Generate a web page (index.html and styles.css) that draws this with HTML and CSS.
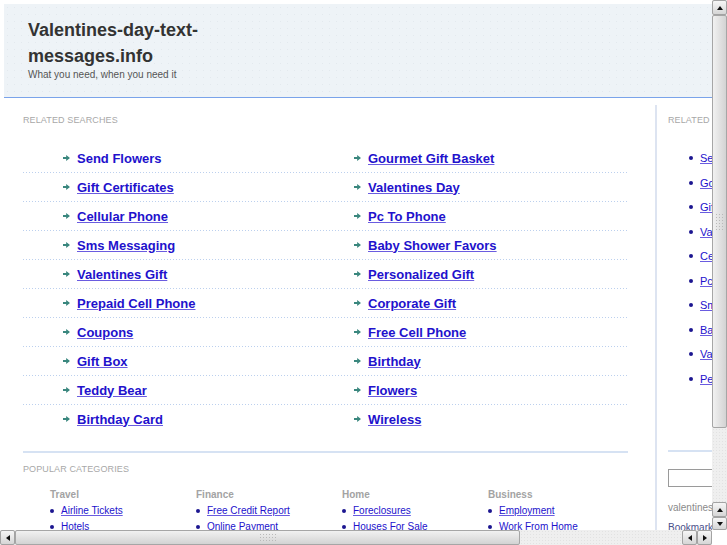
FILE: index.html
```html
<!DOCTYPE html>
<html lang="en">
<head>
    <meta charset="UTF-8">
    <meta name="viewport" content="width=device-width, initial-scale=1.0">
    <title>Valentines-day-text-messages.info</title>
    <link rel="stylesheet" href="styles.css">
</head>
<body>
    <div class="page">
        <div class="header">
            <h1 class="site-name">Valentines-day-text-messages.info</h1>
            <p class="tagline">What you need, when you need it</p>
        </div>
        <div class="main">
            <div class="content">
                <h2 class="section-title">Related Searches</h2>
                <ul class="searches">
                    <li><a href="#" class="plain">Send Flowers</a></li>
                    <li><a href="#">Gourmet Gift Basket</a></li>
                    <li><a href="#">Gift Certificates</a></li>
                    <li><a href="#">Valentines Day</a></li>
                    <li><a href="#">Cellular Phone</a></li>
                    <li><a href="#">Pc To Phone</a></li>
                    <li><a href="#">Sms Messaging</a></li>
                    <li><a href="#">Baby Shower Favors</a></li>
                    <li><a href="#">Valentines Gift</a></li>
                    <li><a href="#">Personalized Gift</a></li>
                    <li><a href="#">Prepaid Cell Phone</a></li>
                    <li><a href="#">Corporate Gift</a></li>
                    <li><a href="#">Coupons</a></li>
                    <li><a href="#">Free Cell Phone</a></li>
                    <li><a href="#">Gift Box</a></li>
                    <li><a href="#">Birthday</a></li>
                    <li><a href="#">Teddy Bear</a></li>
                    <li><a href="#">Flowers</a></li>
                    <li><a href="#">Birthday Card</a></li>
                    <li><a href="#">Wireless</a></li>
                </ul>
                <div class="divider"></div>
                <h2 class="section-title popular">Popular Categories</h2>
                <div class="categories">
                    <div class="category">
                        <h3>Travel</h3>
                        <ul class="bullets">
                            <li><a href="#">Airline Tickets</a></li>
                            <li><a href="#">Hotels</a></li>
                        </ul>
                    </div>
                    <div class="category">
                        <h3>Finance</h3>
                        <ul class="bullets">
                            <li><a href="#">Free Credit Report</a></li>
                            <li><a href="#">Online Payment</a></li>
                        </ul>
                    </div>
                    <div class="category">
                        <h3>Home</h3>
                        <ul class="bullets">
                            <li><a href="#">Foreclosures</a></li>
                            <li><a href="#">Houses For Sale</a></li>
                        </ul>
                    </div>
                    <div class="category">
                        <h3>Business</h3>
                        <ul class="bullets">
                            <li><a href="#">Employment</a></li>
                            <li><a href="#">Work From Home</a></li>
                        </ul>
                    </div>
                </div>
            </div>
            <div class="sidebar">
                <h2 class="section-title">Related Searches</h2>
                <ul class="bullets side-links">
                    <li><a href="#">Send Flowers</a></li>
                    <li><a href="#">Gourmet Gift Basket</a></li>
                    <li><a href="#">Gift Certificates</a></li>
                    <li><a href="#">Valentines Day</a></li>
                    <li><a href="#">Cellular Phone</a></li>
                    <li><a href="#">Pc To Phone</a></li>
                    <li><a href="#">Sms Messaging</a></li>
                    <li><a href="#">Baby Shower Favors</a></li>
                    <li><a href="#">Valentines Gift</a></li>
                    <li><a href="#">Personalized Gift</a></li>
                </ul>
                <div class="divider side-divider"></div>
                <input class="search-box" type="text">
                <p class="domain">valentines-day-text-messages.info</p>
                <p class="bookmark"><a href="#">Bookmark this page</a></p>
            </div>
        </div>
    </div>

    <!-- fake window scrollbars drawn over the page -->
    <div class="vscroll">
        <div class="sb-btn up"></div>
        <div class="sb-thumb v-thumb"><span class="grip v-grip"></span></div>
        <div class="sb-track"></div>
        <div class="sb-btn up"></div>
        <div class="sb-btn down"></div>
    </div>
    <div class="hscroll">
        <div class="sb-btn left"></div>
        <div class="sb-thumb h-thumb"><span class="grip h-grip"></span></div>
        <div class="sb-track"></div>
        <div class="sb-btn left"></div>
        <div class="sb-btn right"></div>
    </div>
    <div class="sb-corner"></div>
</body>
</html>
```

FILE: styles.css
```css
html, body {
    margin: 0;
    padding: 0;
    height: 100%;
    overflow: hidden;
    background: #fff;
}
body {
    font-family: "Liberation Sans", Arial, sans-serif;
    color: #333;
}
ul {
    list-style: none;
    margin: 0;
    padding: 0;
}
a {
    color: #2211cc;
    text-decoration: underline;
    text-decoration-color: #6a5ce0;
}
.page {
    width: 900px;
    margin: 4px 0 0 4px;
}

/* header */
.header {
    background-color: #eef3f7;
    background-image: radial-gradient(#e3e9ee 0.6px, transparent 0.8px);
    background-size: 7px 7px;
    padding: 13px 0 16px 24px;
    border-bottom: 1px solid #7aa3ea;
}
.site-name {
    width: 190px;
    margin: 0;
    font-size: 18px;
    line-height: 26px;
    font-weight: bold;
    color: #333;
}
.tagline {
    margin: 0;
    font-size: 10px;
    line-height: 12px;
    color: #555;
}

/* body columns */
.main {
    display: flex;
    padding: 7px 0 0 19px;
}
.content {
    width: 605px;
    padding-top: 10px;
}
.section-title {
    margin: 0 0 18px;
    font-size: 9px;
    line-height: 11px;
    font-weight: normal;
    text-transform: uppercase;
    letter-spacing: 0.12px;
    color: #a8a8a8;
}
.section-title.popular {
    margin: 11px 0 12px;
}

.searches {
    display: grid;
    grid-template-columns: 291px 314px;
}
.searches li {
    display: flex;
    align-items: center;
    height: 29px;
    padding-left: 40px;
    box-sizing: border-box;
    padding-bottom: 1px;
    background-image: repeating-linear-gradient(to right, #bcd0ee 0 1px, transparent 1px 3px);
    background-size: 100% 1px;
    background-position: left bottom;
    background-repeat: no-repeat;
}
.searches li:nth-last-child(-n+2) {
    background-image: none;
}
.searches li::before {
    content: "";
    width: 7px;
    height: 6px;
    margin-right: 7px;
    background: #3a877e;
    clip-path: polygon(0 33%, 45% 33%, 45% 0, 100% 50%, 45% 100%, 45% 67%, 0 67%);
}
.searches a {
    font-size: 13px;
    font-weight: bold;
}
.searches a.plain {
    text-decoration: none;
}

.divider {
    height: 2px;
    margin-top: 17px;
    background-image: radial-gradient(#d6e2f3 0.8px, transparent 1px);
    background-size: 2px 2px;
    background-color: #eaf0f9;
}

.categories {
    display: grid;
    grid-template-columns: repeat(4, 146px);
    padding-left: 27px;
}
.category h3 {
    margin: 0;
    font-size: 10px;
    line-height: 16px;
    font-weight: bold;
    color: #a3a3a3;
}
.bullets li {
    display: flex;
    align-items: center;
    font-size: 10px;
    line-height: 16px;
}
.bullets li::before {
    content: "";
    width: 4px;
    height: 4px;
    margin-right: 7px;
    border-radius: 50%;
    background: #1c1690;
    flex: none;
}

/* right column */
.sidebar {
    width: 240px;
    margin-left: 27px;
    padding: 10px 0 0 11px;
    border-left: 2px solid #dde4f1;
    white-space: nowrap;
}
.side-links {
    margin-top: 20px;
    padding-left: 21px;
}
.side-links li {
    font-size: 11px;
    line-height: 24.5px;
}
.side-divider {
    margin-top: 59px;
}
.search-box {
    display: block;
    width: 160px;
    height: 18px;
    margin: 17px 0 0;
    padding: 0;
    border: 1px solid #9a9a9a;
    box-sizing: border-box;
}
.domain {
    margin: 15px 0 0;
    font-size: 10px;
    line-height: 12px;
    color: #8a8a8a;
}
.bookmark {
    margin: 8px 0 0;
    font-size: 10px;
    line-height: 12px;
}
.bookmark a {
    color: #4b4f8a;
    text-decoration: none;
}

/* scrollbars */
.vscroll {
    position: fixed;
    top: 0;
    right: 0;
    width: 15px;
    height: 530px;
    display: flex;
    flex-direction: column;
    background: #ececec;
}
.hscroll {
    position: fixed;
    left: 0;
    bottom: 0;
    width: 712px;
    height: 15px;
    display: flex;
    background: #ececec;
}
.sb-corner {
    position: fixed;
    right: 0;
    bottom: 0;
    width: 15px;
    height: 15px;
    background: #fff;
}
.sb-btn {
    flex: none;
    width: 15px;
    height: 15px;
    box-sizing: border-box;
    border: 1px solid #a3a3a3;
    border-radius: 2px;
    background: linear-gradient(#f6f6f6, #d6d6d6);
    display: flex;
    align-items: center;
    justify-content: center;
}
.vscroll .sb-btn.down {
    height: 13px;
}
.sb-btn::before {
    content: "";
    border: 3.5px solid transparent;
}
.sb-btn.up::before {
    border-bottom: 4px solid #111;
    border-top: none;
}
.sb-btn.down::before {
    border-top: 4px solid #111;
    border-bottom: none;
}
.sb-btn.left::before {
    border-right: 4px solid #111;
    border-left: none;
}
.sb-btn.right::before {
    border-left: 4px solid #111;
    border-right: none;
}
.sb-thumb {
    flex: none;
    box-sizing: border-box;
    border: 1px solid #a6a6a6;
    border-radius: 2px;
    display: flex;
    align-items: center;
    justify-content: center;
}
.v-thumb {
    height: 413px;
    background: linear-gradient(to right, #f1f1f1, #d3d3d3);
}
.h-thumb {
    width: 505px;
    background: linear-gradient(#f1f1f1, #d3d3d3);
}
.sb-track {
    flex: 1;
    background-color: #efefef;
    background-image: radial-gradient(#e2e2e2 0.6px, transparent 0.8px);
    background-size: 3px 3px;
}
.grip {
    display: block;
    background-image: radial-gradient(#b9b9b9 0.7px, transparent 0.9px);
    background-size: 3px 3px;
}
.v-grip {
    width: 9px;
    height: 17px;
}
.h-grip {
    width: 17px;
    height: 9px;
}
```
